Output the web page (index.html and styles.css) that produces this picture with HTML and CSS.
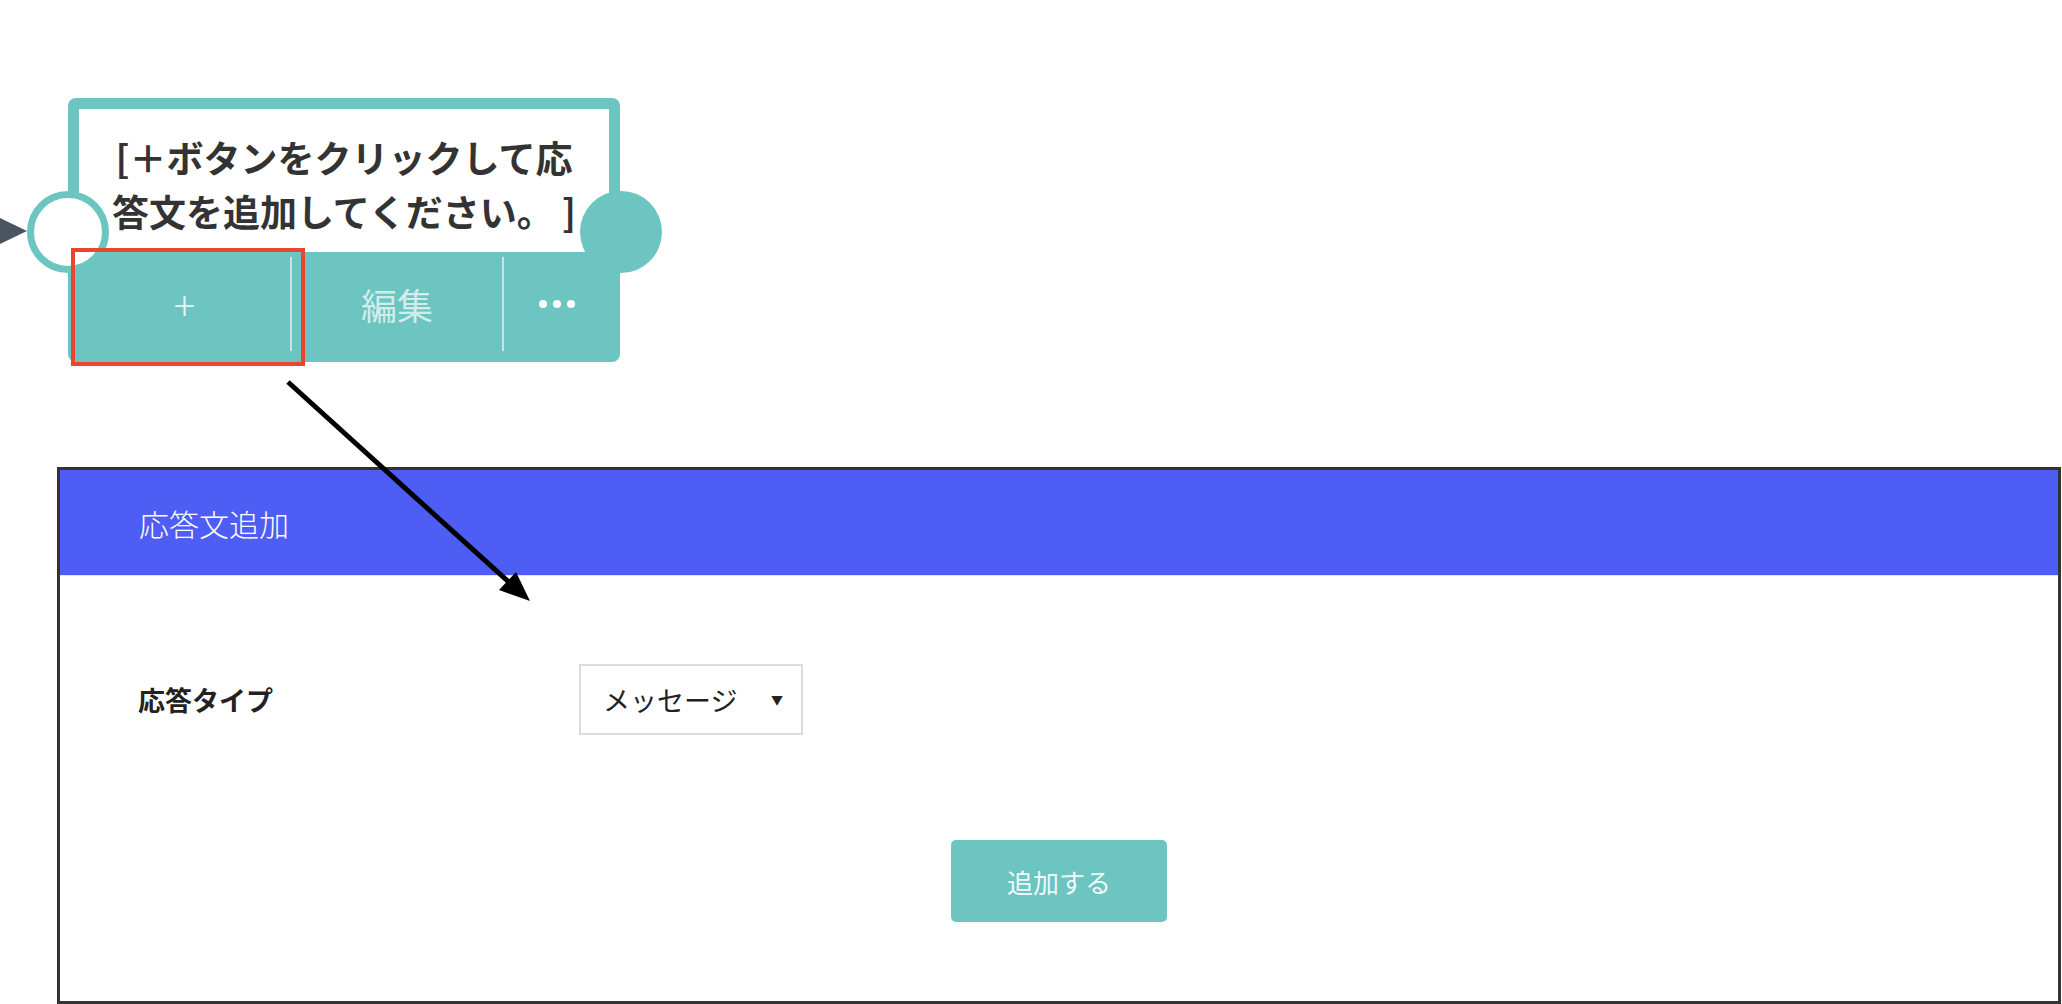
FILE: index.html
```html
<html lang="ja">
<head>
    <meta charset="UTF-8">
    <meta name="viewport" content="width=device-width, initial-scale=1.0">
    <title>応答文追加</title>
    <link rel="stylesheet" href="styles.css">
</head>
<body>

    <div class="canvas">
        <div class="port-arrow"></div>
        <div class="node">
            <div class="node-text">[＋ボタンをクリックして応<br>答文を追加してください。 ]</div>
            <div class="node-actions">
                <div class="node-btn plus">+</div>
                <div class="node-btn">編集</div>
                <div class="node-btn">
                    <svg width="36" height="10" viewBox="0 0 36 10">
                        <circle cx="4" cy="5" r="4" fill="#fff"/>
                        <circle cx="18" cy="5" r="4" fill="#fff"/>
                        <circle cx="32" cy="5" r="4" fill="#fff"/>
                    </svg>
                </div>
            </div>
            <span class="port port-in"></span>
            <span class="port port-out"></span>
        </div>
        <div class="highlight"></div>
    </div>

    <div class="dialog">
        <div class="dialog-header">応答文追加</div>
        <div class="dialog-body">
            <div class="form-row">
                <div class="form-label">応答タイプ</div>
                <div class="select">
                    <span>メッセージ</span>
                    <span class="caret">▼</span>
                </div>
            </div>
            <div class="actions">
                <button class="btn-add">追加する</button>
            </div>
        </div>
    </div>

    <!-- 説明用の矢印 -->
    <svg class="pointer" width="2062" height="1004" viewBox="0 0 2062 1004">
        <line x1="288" y1="382" x2="512" y2="585" stroke="#000" stroke-width="5"/>
        <polygon points="530,601 499,590 516,572" fill="#000"/>
    </svg>

</body>
</html>
```

FILE: styles.css
```css
body {
    margin: 0;
    background-color: #fff;
    font-family: "Noto Sans CJK JP", "Noto Sans", sans-serif;
}

.canvas {
    position: relative;
    height: 467px;
}

.port-arrow {
    position: absolute;
    left: 0;
    top: 218px;
    width: 0;
    height: 0;
    border-left: 27px solid #4a5461;
    border-top: 13px solid transparent;
    border-bottom: 13px solid transparent;
}

.node {
    position: absolute;
    left: 68px;
    top: 98px;
    width: 552px;
    box-sizing: border-box;
    padding: 11px 11px 11px;
    background-color: #6cc5c1;
    border-radius: 8px;
}

.node-text {
    height: 143px;
    background-color: #fff;
    display: flex;
    align-items: center;
    justify-content: center;
    text-align: center;
    white-space: pre;
    font-size: 37px;
    font-weight: bold;
    line-height: 54px;
    color: #333;
    padding-top: 6px;
    box-sizing: border-box;
}

.node-actions {
    display: grid;
    grid-template-columns: 211px 212px 1fr;
    height: 99px;
    padding-top: 5px;
    box-sizing: border-box;
}

.node-btn {
    display: flex;
    align-items: center;
    justify-content: center;
    color: rgba(255, 255, 255, 0.7);
    font-size: 36px;
}

.node-btn + .node-btn {
    border-left: 2px solid rgba(255, 255, 255, 0.6);
}

.node-btn.plus {
    font-size: 40px;
    font-weight: 300;
    color: rgba(255, 255, 255, 0.85);
}

.port {
    position: absolute;
    top: 93px;
    width: 82px;
    height: 82px;
    box-sizing: border-box;
    border-radius: 50%;
}

.port-in {
    left: -41px;
    background-color: #fff;
    border: 7px solid #6cc5c1;
}

.port-out {
    left: 512px;
    background-color: #6cc5c1;
}

.highlight {
    position: absolute;
    left: 71px;
    top: 248px;
    width: 234px;
    height: 118px;
    box-sizing: border-box;
    border: 4px solid #e8472e;
}

/* ダイアログ */
.dialog {
    margin-left: 57px;
    width: 2004px;
    height: 537px;
    box-sizing: border-box;
    border: 3px solid #333;
}

.dialog-header {
    height: 106px;
    box-sizing: border-box;
    padding-left: 79px;
    display: flex;
    align-items: center;
    background-color: #4e5ef5;
    border-bottom: 1px solid #dde1fd;
    color: #fff;
    font-size: 30px;
    font-weight: 300;
}

.dialog-body {
    padding: 88px 0 0 78px;
}

.form-row {
    display: flex;
    align-items: center;
}

.form-label {
    width: 441px;
    font-size: 27px;
    font-weight: bold;
    color: #222;
}

.select {
    width: 224px;
    height: 71px;
    box-sizing: border-box;
    border: 2px solid #dcdcdc;
    padding: 0 18px 0 22px;
    display: flex;
    align-items: center;
    justify-content: space-between;
    font-size: 27px;
    color: #222;
}

.caret {
    font-size: 12px;
}

.actions {
    margin-top: 105px;
    margin-left: -78px;
    text-align: center;
}

.btn-add {
    width: 216px;
    height: 82px;
    border: none;
    border-radius: 5px;
    background-color: #6cc5c1;
    color: rgba(255, 255, 255, 0.92);
    font-family: "Noto Sans CJK JP", "Noto Sans", sans-serif;
    font-size: 26px;
    cursor: pointer;
}

.pointer {
    position: absolute;
    left: 0;
    top: 0;
    pointer-events: none;
}
```
